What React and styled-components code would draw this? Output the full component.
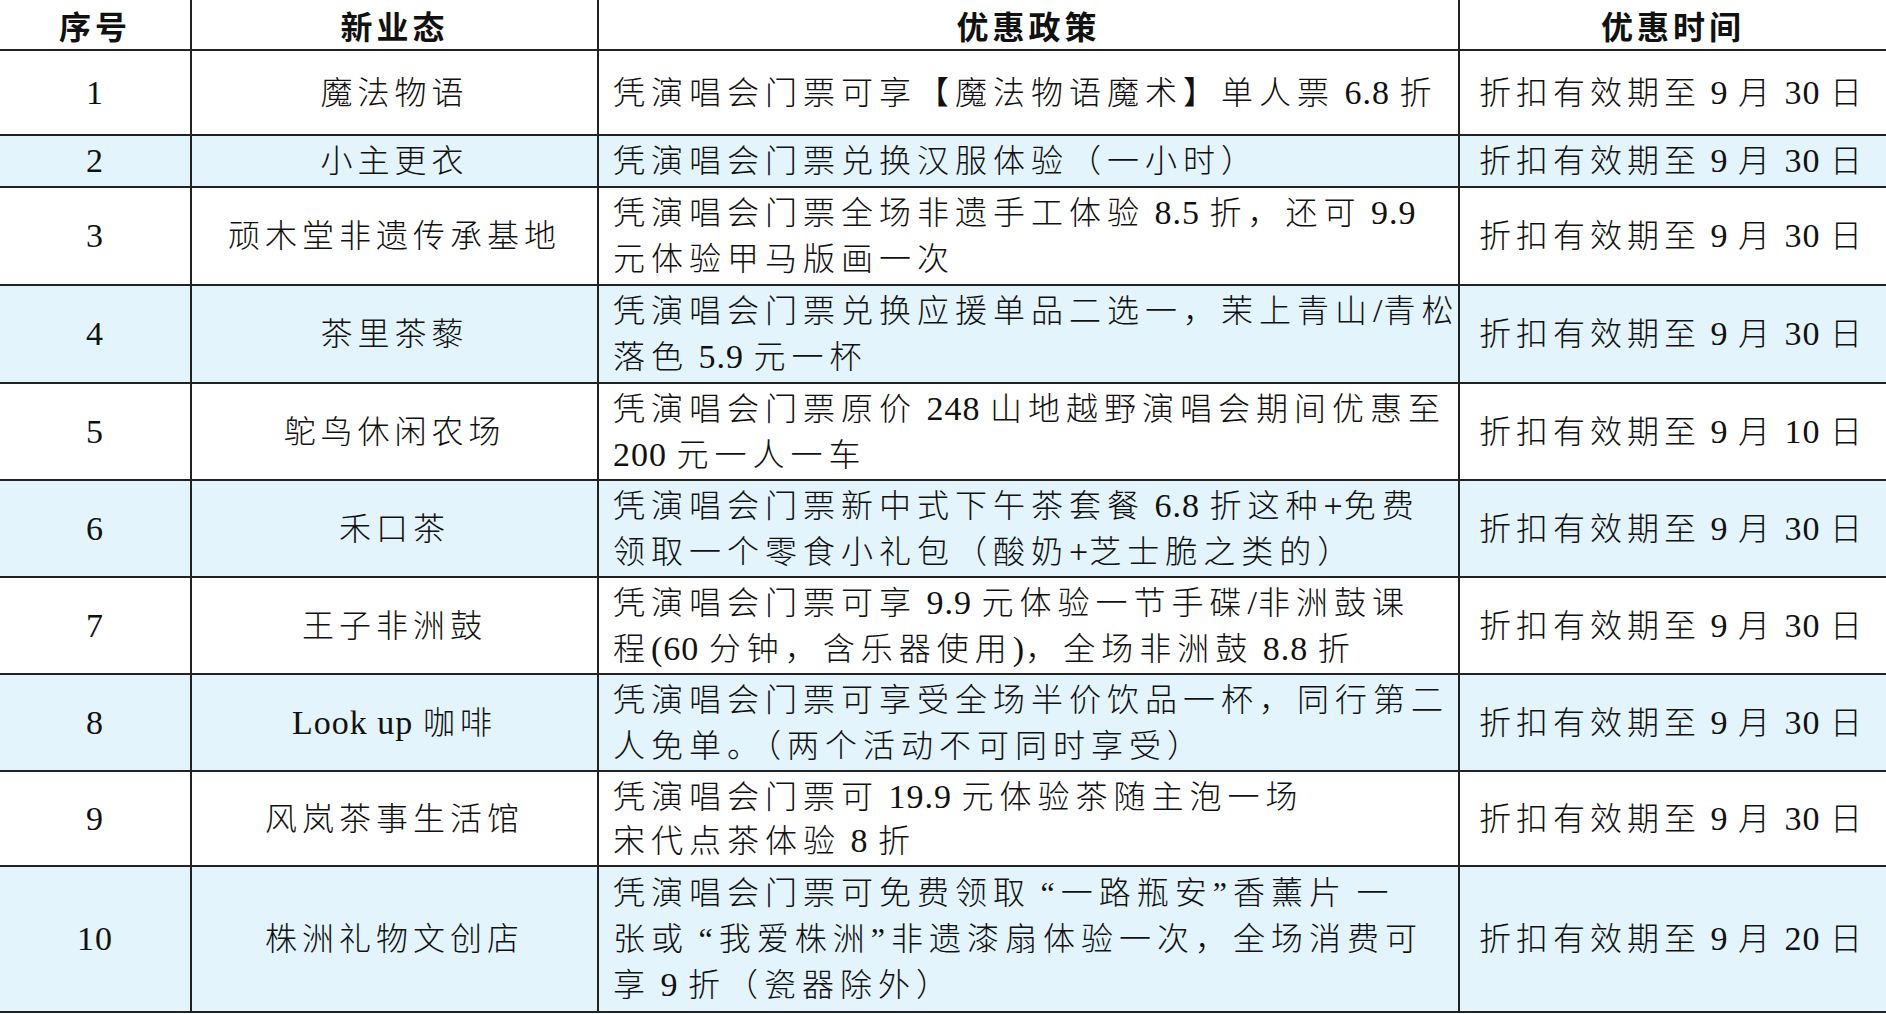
import React from "react";
import styled, { createGlobalStyle } from "styled-components";

const GlobalStyle = createGlobalStyle`
  html, body {
    margin: 0;
    padding: 0;
    background: #ffffff;
  }
  body {
    font-family: "Liberation Serif", "Noto Sans CJK SC", serif;
    color: #111;
  }
`;

const rows = [
  { no: "1", name: "魔法物语", policy: ["凭演唱会门票可享【魔法物语魔术】单人票 6.8 折"], date: "30", h: 85 },
  { no: "2", name: "小主更衣", policy: ["凭演唱会门票兑换汉服体验（一小时）"], date: "30", h: 52 },
  { no: "3", name: "顽木堂非遗传承基地", policy: ["凭演唱会门票全场非遗手工体验 8.5 折，还可 9.9", "元体验甲马版画一次"], date: "30", h: 98 },
  { no: "4", name: "茶里茶藜", policy: ["凭演唱会门票兑换应援单品二选一，茉上青山/青松", "落色 5.9 元一杯"], date: "30", h: 98 },
  { no: "5", name: "鸵鸟休闲农场", policy: ["凭演唱会门票原价 248 山地越野演唱会期间优惠至", "200 元一人一车"], date: "10", h: 97 },
  { no: "6", name: "禾口茶", policy: ["凭演唱会门票新中式下午茶套餐 6.8 折这种+免费", "领取一个零食小礼包（酸奶+芝士脆之类的）"], date: "30", h: 97 },
  { no: "7", name: "王子非洲鼓", policy: ["凭演唱会门票可享 9.9 元体验一节手碟/非洲鼓课", "程(60 分钟，含乐器使用)，全场非洲鼓 8.8 折"], date: "30", h: 97 },
  { no: "8", name: "Look up 咖啡", policy: ["凭演唱会门票可享受全场半价饮品一杯，同行第二", "人免单。（两个活动不可同时享受）"], date: "30", h: 97 },
  { no: "9", name: "风岚茶事生活馆", policy: ["凭演唱会门票可 19.9 元体验茶随主泡一场", "宋代点茶体验 8 折"], date: "30", h: 95, tight: true },
  { no: "10", name: "株洲礼物文创店", policy: ["凭演唱会门票可免费领取 “一路瓶安”香薰片 一", "张或 “我爱株洲”非遗漆扇体验一次，全场消费可", "享 9 折（瓷器除外）"], date: "20", h: 146 },
];

const Sheet = styled.table`
  width: 1886px;
  border-collapse: collapse;
  table-layout: fixed;
  font-size: 32px;
  letter-spacing: 5px;
`;

const HeadCell = styled.th`
  height: 49px;
  padding: 0;
  font-size: 32px;
  font-weight: 700;
  letter-spacing: 4px;
  text-align: center;
  vertical-align: middle;
  border-bottom: 2px solid #222;
  &:not(:last-child) {
    border-right: 2px solid #222;
  }
`;

const Row = styled.tr`
  background: ${(p) => (p.$tinted ? "#e3f4fc" : "#ffffff")};
`;

const Cell = styled.td`
  padding: 0 0 0 ${(p) => (p.$left ? "14px" : "0")};
  text-align: ${(p) => (p.$left ? "left" : "center")};
  vertical-align: middle;
  white-space: nowrap;
  font-weight: 300;
  letter-spacing: ${(p) => (p.$left ? "6px" : "5px")};
  line-height: ${(p) => (p.$tight ? "43px" : "46px")};
  border-bottom: 2px solid #222;
  &:not(:last-child) {
    border-right: 2px solid #222;
  }
`;

const Latin = styled.span`
  font-family: "Liberation Serif", serif;
  font-size: 34px;
  font-weight: 400;
  letter-spacing: 1px;
`;

// wrap ASCII runs so digits/letters get their own size and spacing
function Mixed({ text }) {
  return text.split(/([\x20-\x7E]+)/).map((part, i) =>
    /^[\x20-\x7E]+$/.test(part) ? <Latin key={i}>{part}</Latin> : part
  );
}

export default function App() {
  return (
    <>
      <GlobalStyle />
      <Sheet>
        <colgroup>
          <col style={{ width: 191 }} />
          <col style={{ width: 407 }} />
          <col style={{ width: 861 }} />
          <col style={{ width: 427 }} />
        </colgroup>
        <thead>
          <tr>
            <HeadCell>序号</HeadCell>
            <HeadCell>新业态</HeadCell>
            <HeadCell>优惠政策</HeadCell>
            <HeadCell>优惠时间</HeadCell>
          </tr>
        </thead>
        <tbody>
          {rows.map((r, i) => (
            <Row key={r.no} $tinted={i % 2 === 1} style={{ height: r.h }}>
              <Cell>
                <Mixed text={r.no} />
              </Cell>
              <Cell>
                <Mixed text={r.name} />
              </Cell>
              <Cell $left $tight={r.tight}>
                {r.policy.map((line, j) => (
                  <React.Fragment key={j}>
                    {j > 0 && <br />}
                    <Mixed text={line} />
                  </React.Fragment>
                ))}
              </Cell>
              <Cell>
                <Mixed text={`折扣有效期至 9 月 ${r.date} 日`} />
              </Cell>
            </Row>
          ))}
        </tbody>
      </Sheet>
    </>
  );
}
